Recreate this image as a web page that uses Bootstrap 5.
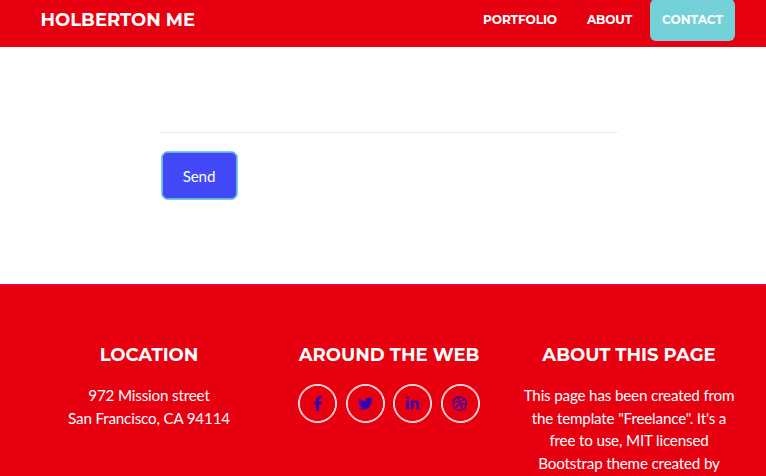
<!DOCTYPE html>
<html lang="en">
<head>
<meta charset="utf-8">
<meta name="viewport" content="width=device-width, initial-scale=1">
<title>Holberton Me</title>
<link href="https://cdn.jsdelivr.net/npm/bootstrap@5.3.0/dist/css/bootstrap.min.css" rel="stylesheet">
<style>
body{font-family:Lato,sans-serif;font-size:15.2px;line-height:22.7px;overflow:hidden;height:476px;background:#fff}
.site-nav{background:#e7000f;height:47px;padding:0 31px 0 40.5px}
.site-nav .navbar-brand,.site-nav .nav-link,.foot-title{font-family:Montserrat,Inter,sans-serif;font-weight:700;color:#fff;white-space:nowrap}
.site-nav .navbar-brand{font-size:18px;line-height:24px;margin:0;padding:0;transform:translateY(-4px)}
.site-nav .navbar-nav{margin-top:-8px;gap:6px}
.site-nav .nav-link{font-size:12.16px;line-height:18px;padding:12px!important;border-radius:6px;letter-spacing:-.13px}
.site-nav .nav-link.active{background:#74d1d7;color:#fff!important;letter-spacing:0}
.contact-area{height:237px;padding:85px 148px 0 160px}
.field-line{border-bottom:1px solid #eee}
.send-btn{background:#4248f5!important;border:1px solid #74d1d7!important;box-shadow:inset 0 0 0 .8px #74d1d7;border-radius:7px;width:77px;height:49px;margin-top:18px;color:#fff!important;font-size:15.2px;padding:2px 1px 0 0;margin-left:1px;letter-spacing:-.15px}
.site-footer{background:#e7000f;border-top:1px solid #e6006c;height:192px;padding:57px 17px 0 29px;color:#fff}
.foot-title{font-size:18.05px;line-height:27px;margin:0 0 15px}
.foot-text{margin:0;white-space:nowrap;letter-spacing:-.17px}
.social{width:39px;height:39px;border:1px solid #fff;box-shadow:inset 0 0 0 .8px #fff;color:#3500b4}
.social svg{height:15.2px;fill:currentColor}
.socials{gap:8.4px}
</style>
</head>
<body>
<nav class="site-nav navbar navbar-expand d-flex justify-content-between">
<a class="navbar-brand text-uppercase" href="#">Holberton Me</a>
<ul class="navbar-nav text-uppercase">
<li class="nav-item"><a class="nav-link" href="#">Portfolio</a></li>
<li class="nav-item"><a class="nav-link" href="#">About</a></li>
<li class="nav-item"><a class="nav-link active" href="#">Contact</a></li>
</ul>
</nav>
<main class="contact-area">
<div class="field-line"></div>
<button class="btn btn-primary send-btn" type="button">Send</button>
</main>
<footer class="site-footer text-center">
<div class="row g-0">
<div class="col-4"><h4 class="foot-title">LOCATION</h4>
<p class="foot-text">972 Mission street<br>San Francisco, CA 94114</p></div>
<div class="col-4"><h4 class="foot-title">AROUND THE WEB</h4>
<div class="socials d-flex justify-content-center">
<a class="social rounded-circle d-flex align-items-center justify-content-center" href="#" aria-label="Facebook"><svg viewBox="0 0 320 512"><path d="M279.14 288l14.22-92.66h-88.91v-60.13c0-25.35 12.42-50.06 52.24-50.06h40.42V6.26S260.43 0 225.36 0c-73.22 0-121.08 44.38-121.08 124.72v70.62H22.89V288h81.39v224h100.17V288z"/></svg></a>
<a class="social rounded-circle d-flex align-items-center justify-content-center" href="#" aria-label="Twitter"><svg viewBox="0 0 512 512"><path d="M459.37 151.716c.325 4.548.325 9.097.325 13.645 0 138.72-105.583 298.558-298.558 298.558-59.452 0-114.68-17.219-161.137-47.106 8.447.974 16.568 1.299 25.34 1.299 49.055 0 94.213-16.568 130.274-44.832-46.132-.975-84.792-31.188-98.112-72.772 6.498.974 12.995 1.624 19.818 1.624 9.421 0 18.843-1.3 27.614-3.573-48.081-9.747-84.143-51.98-84.143-102.985v-1.299c13.969 7.797 30.214 12.67 47.431 13.319-28.264-18.843-46.781-51.005-46.781-87.391 0-19.492 5.197-37.36 14.294-52.954 51.655 63.675 129.3 105.258 216.365 109.807-1.624-7.797-2.599-15.918-2.599-24.04 0-57.828 46.782-104.934 104.934-104.934 30.213 0 57.502 12.67 76.67 33.137 23.715-4.548 46.456-13.32 66.599-25.34-7.798 24.366-24.366 44.833-46.132 57.827 21.117-2.273 41.584-8.122 60.426-16.243-14.292 20.791-32.161 39.308-52.628 54.253z"/></svg></a>
<a class="social rounded-circle d-flex align-items-center justify-content-center" href="#" aria-label="LinkedIn"><svg viewBox="0 0 448 512"><path d="M100.28 448H7.4V148.9h92.88zM53.79 108.1C24.09 108.1 0 83.5 0 53.8a53.79 53.79 0 0 1 107.58 0c0 29.7-24.1 54.3-53.79 54.3zM447.9 448h-92.68V302.4c0-34.7-.7-79.2-48.29-79.2-48.29 0-55.69 37.7-55.69 76.7V448h-92.78V148.9h89.08v40.8h1.3c12.4-23.5 42.69-48.3 87.88-48.3 94 0 111.28 61.9 111.28 142.3V448z"/></svg></a>
<a class="social rounded-circle d-flex align-items-center justify-content-center" href="#" aria-label="Dribbble"><svg viewBox="0 0 512 512"><g fill="none" stroke="currentColor" stroke-width="44"><circle cx="256" cy="256" r="229"/><path d="M170 45C245 135 310 265 344 462M30 209C190 212 320 186 413 96M101 420C174 292 310 230 482 272"/></g></svg></a>
</div></div>
<div class="col-4"><h4 class="foot-title">ABOUT THIS PAGE</h4>
<p class="foot-text">This page has been created from<br>the template "Freelance". It's a<br>free to use, MIT licensed<br>Bootstrap theme created by</p></div>
</div>
</footer>
<script src="https://cdn.jsdelivr.net/npm/bootstrap@5.3.0/dist/js/bootstrap.bundle.min.js"></script>
</body>
</html>
